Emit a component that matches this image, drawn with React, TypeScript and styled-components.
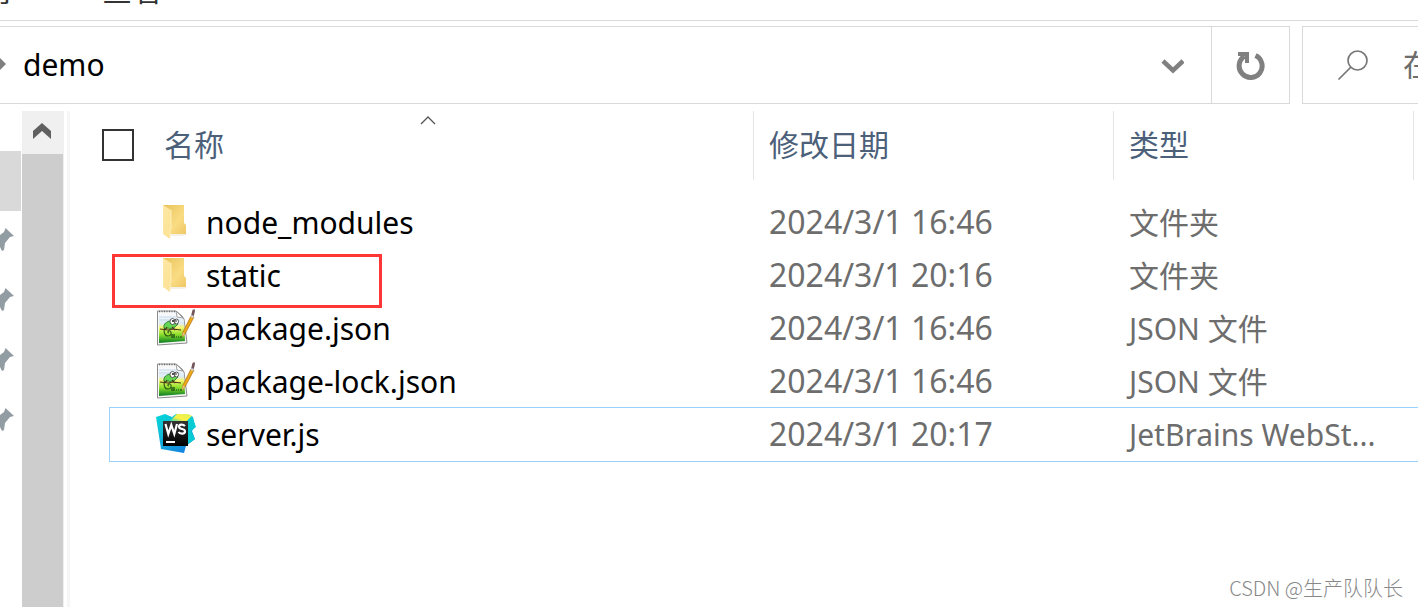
import React from "react";
import styled, { createGlobalStyle, css } from "styled-components";

const LINE = "#d9d9d9";
const GREY = "#6d6d6d";
const HEADER = "#4c607a";

const GlobalStyle = createGlobalStyle`
  * { box-sizing: border-box; }
  body {
    margin: 0;
    background: #fff;
    color: #000;
    font-family: "Noto Sans", "Noto Sans CJK SC", sans-serif;
    font-size: 30px;
    line-height: 40px;
    overflow: hidden;
  }
  button, input { font: inherit; color: inherit; background: none; border: 0; padding: 0; margin: 0; }
  svg { display: block; flex: none; }
`;

const Window = styled.div`
  position: relative;
  display: flex;
  flex-direction: column;
  height: 100vh;
  overflow: hidden;
`;

const RibbonTabs = styled.nav`
  display: flex;
  flex: none;
  align-items: flex-end;
  gap: 80px;
  height: 21px;
  margin-left: -38px;
  padding-bottom: 10px;
  border-bottom: 1px solid ${LINE};
  overflow: hidden;
`;

const RibbonTab = styled.button`
  flex: none;
  color: #333;
`;

const NavigationRow = styled.div`
  display: flex;
  flex: none;
  gap: 12px;
  height: 78px;
  margin-top: 5px;
`;

const AddressBar = styled.div`
  display: flex;
  flex: 1;
  align-items: center;
  border: 1px solid ${LINE};
  border-left: 0;
`;

const Crumb = styled.button`
  flex: 1;
  margin-left: 17px;
  text-align: left;
`;

const BarButton = styled.button<{ $divided?: boolean }>`
  display: flex;
  align-items: center;
  justify-content: center;
  width: 78px;
  height: 100%;
  padding-top: 2px;
  ${(p) => p.$divided && css`border-left: 1px solid ${LINE};`}
`;

const SearchBox = styled.label`
  display: flex;
  flex: none;
  align-items: center;
  gap: 34px;
  width: 116px;
  padding-left: 34px;
  border: 1px solid ${LINE};
  border-right: 0;
  overflow: hidden;
`;

const SearchInput = styled.input`
  flex: none;
  width: 240px;
  color: ${GREY};
  &::placeholder { color: ${GREY}; opacity: 1; }
`;

const Body = styled.div`
  display: flex;
  flex: 1;
  min-height: 0;
  margin-top: 7px;
`;

const QuickAccess = styled.ul`
  flex: none;
  width: 22px;
  margin: 0;
  padding: 40px 1px 0 0;
  list-style: none;
`;

const QuickItem = styled.li<{ $selected?: boolean }>`
  display: flex;
  align-items: center;
  height: 60px;
  padding-bottom: 2px;
  background: ${(p) => (p.$selected ? LINE : "transparent")};
`;

const ScrollTrack = styled.div`
  display: flex;
  flex: none;
  flex-direction: column;
  width: 42px;
  background: #f0f0f0;
`;

const ScrollUp = styled.button`
  display: flex;
  justify-content: center;
  height: 43px;
  padding: 12px 2px 0 0;
`;

const ScrollThumb = styled.div`
  flex: 1;
  margin-right: 1px;
  background: #cdcdcd;
`;

const Splitter = styled.div`
  flex: none;
  width: 3px;
  margin: 0 40px 0 3px;
  background: #f6f6f6;
`;

const FileTable = styled.table`
  flex: 1;
  width: 100%;
  align-self: flex-start;
  table-layout: fixed;
  border-collapse: collapse;
`;

const Column = styled.col<{ $width?: number }>`
  width: ${(p) => (p.$width ? `${p.$width}px` : "auto")};
`;

const HeadCell = styled.th`
  height: 85px;
  padding: 0;
  vertical-align: top;
  text-align: left;
  font-weight: 400;
  color: ${HEADER};
`;

const HeadContent = styled.div<{ $lead?: boolean }>`
  position: relative;
  display: flex;
  align-items: center;
  gap: 30px;
  height: 69px;
  margin-left: ${(p) => (p.$lead ? "-8px" : "0")};
  padding-bottom: 2px;
  padding-left: ${(p) => (p.$lead ? "0" : "15px")};
  border-right: 1px solid #e5e5e5;
`;

const SelectAll = styled.input`
  appearance: none;
  width: 32px;
  height: 32px;
  border: 2px solid #333;
`;

const SortMark = styled.svg`
  position: absolute;
  top: 4px;
  left: 50%;
  transform: translateX(-50%);
`;

const FileRow = styled.tr<{ $focused?: boolean }>`
  outline: ${(p) => (p.$focused ? "1px solid #99d1ff" : "none")};
`;

const Cell = styled.td`
  position: relative;
  height: 53px;
  padding: 0 0 0 15px;
  color: ${GREY};
  white-space: nowrap;
`;

const DateCell = styled(Cell)`
  padding-bottom: 2px;
  font-size: 32px;
`;

const NameCell = styled(Cell)`
  padding-left: 46px;
  color: #000;
`;

const FileLabel = styled.div`
  display: flex;
  align-items: center;
  gap: 10px;

  svg { margin-bottom: 4px; }
`;

const Marker = styled.span`
  position: absolute;
  z-index: 1;
  top: 5px;
  left: 2px;
  width: 270px;
  height: 54px;
  border: 3px solid #ff3636;
`;

const Watermark = styled.div`
  position: absolute;
  right: 15px;
  bottom: 5px;
  font-family: "Noto Sans CJK SC", sans-serif;
  font-size: 20px;
  line-height: 28px;
  font-weight: 300;
  color: #888;
`;

const FolderIcon = () => (
  <svg width="40" height="40" viewBox="0 0 40 40" aria-hidden="true">
    <defs>
      <linearGradient id="folderBack" x1="0" y1="0" x2="1" y2="1">
        <stop offset="0" stopColor="#e9c25a" />
        <stop offset="0.6" stopColor="#f9dc83" />
        <stop offset="1" stopColor="#efc765" />
      </linearGradient>
      <linearGradient id="folderFlap" x1="0" y1="0" x2="1" y2="1">
        <stop offset="0" stopColor="#fee9a5" />
        <stop offset="1" stopColor="#fbe091" />
      </linearGradient>
    </defs>
    <path d="M13 33h19l-4 2H14z" fill="#f4f0e8" />
    <path d="M7 4h21v18l2 2v9H7z" fill="url(#folderBack)" />
    <path d="M7 4l8 5v19l-1 1v9l-7-5z" fill="url(#folderFlap)" />
    <path d="M15 9v19l-1 1v8" fill="none" stroke="#fff0bb" />
  </svg>
);

const NotepadIcon = () => (
  <svg width="40" height="40" viewBox="0 0 40 40" aria-hidden="true">
    <defs>
      <linearGradient id="notePaper" x1="0" y1="0" x2="0" y2="1">
        <stop offset="0" stopColor="#f8fbff" />
        <stop offset="0.3" stopColor="#dcebf5" />
        <stop offset="0.45" stopColor="#f2f86c" />
        <stop offset="0.7" stopColor="#8ade2b" />
        <stop offset="1" stopColor="#087b24" />
      </linearGradient>
    </defs>
    <path d="M1.500 4H20l6 5 2 3 3 24-29.500 2z" fill="#f8f8f8" stroke="#8b8b8b" />
    <path d="M3 8h21l4 6 1 20-26 2z" fill="url(#notePaper)" />
    <path d="M20 4l1 6 6 1z" fill="#fff" stroke="#888" strokeWidth=".8" />
    <path d="M3 4.500h17" stroke="#666" strokeWidth="1.500" strokeDasharray="1 1.500" />
    <path d="M3 10h17M3 13h21" stroke="#b5cbdc" strokeWidth=".7" />
    <path d="M8 21c-1-4 3-7 7-7l4-1 3 4-3 3-3 2-4-1-2 1-2-1z" fill="#65d651" stroke="#236b28" strokeWidth=".8" />
    <path d="M8.500 21c-1 4 0 8 3.500 8s4-4 2-5-3 2-1 2" fill="none" stroke="#365e17" strokeWidth="1.200" />
    <path d="M4 22l8 1 5-1 8 1M16 20l3 3m-8-3-2 3" stroke="#4e341b" strokeWidth="1.200" fill="none" />
    <ellipse cx="16.500" cy="14.500" rx="2.500" ry="3" fill="#fff" stroke="#333" strokeWidth=".8" />
    <ellipse cx="20.500" cy="14.500" rx="2" ry="2.500" fill="#fff" stroke="#333" strokeWidth=".8" />
    <circle cx="17" cy="14" r="1" fill="#111" />
    <circle cx="20" cy="14" r=".8" fill="#111" />
    <path d="M16 27v4m2-4v4m2-1h1m1 0h1m1 0h2" stroke="#173e12" strokeWidth="1.200" />
    <path d="M35 9l3 1-9 17-3 3 1-5z" fill="#efaa18" stroke="#a96b15" strokeWidth=".7" />
    <path d="M35 9l1.500-6 2-1 .5 2-1.500 6z" fill="#735458" />
    <path d="M34.500 10l2.500 1 1-2-2.500-1z" fill="#cfd2d5" />
    <path d="M27 25l-1 5 3-3z" fill="#eac384" />
  </svg>
);

const WebStormIcon = () => (
  <svg width="40" height="40" viewBox="0 0 40 40" aria-hidden="true">
    <defs>
      <linearGradient id="wsBlue" x1="0" y1="0" x2=".6" y2="1">
        <stop offset="0" stopColor="#00d5d8" />
        <stop offset=".4" stopColor="#12bfd8" />
        <stop offset="1" stopColor="#1586df" />
      </linearGradient>
      <linearGradient id="wsYellow" x1="0" y1="1" x2="1" y2="0">
        <stop offset=".1" stopColor="#16d7bd" />
        <stop offset=".5" stopColor="#fff043" />
        <stop offset="1" stopColor="#d7f35c" />
      </linearGradient>
      <linearGradient id="wsTile" x1="0" y1="0" x2="0" y2="1">
        <stop offset="0" stopColor="#333" />
        <stop offset="1" stopColor="#000" />
      </linearGradient>
    </defs>
    <path d="M5 36L0 4l9-3 7 3 4-3h11l6 3 2 9-3 5 3 8-9 7-2 7z" fill="url(#wsBlue)" />
    <path d="M12 10l9-9h11l4 2-7 7z" fill="url(#wsYellow)" />
    <path d="M30 9l6-6 4 11-5 4 4 8-7 5z" fill="#08cbd3" />
    <path d="M7 8h25v25H7z" fill="url(#wsTile)" />
    <path d="M10 29h9" stroke="#fff" strokeWidth="2" />
    <path d="M9.500 11l2.800 10 3-9 3 9 2.700-10" fill="none" stroke="#fff" strokeWidth="2.200" />
    <path d="M29 13c-2-2-6-2-6 .8 0 3 6 1.500 6 4.500 0 3-5 3-6.500 .7" fill="none" stroke="#fff" strokeWidth="2.200" />
  </svg>
);

const PinIcon = () => (
  <svg width="14" height="24" viewBox="0 0 14 24" aria-hidden="true">
    <path d="M5.500 0L14 8l-4 1-5 6-1 7-2 1-2-4V7l4-3z" fill="#929ca3" />
  </svg>
);

const icons = { folder: FolderIcon, json: NotepadIcon, webstorm: WebStormIcon };

type FileEntry = {
  name: string;
  date: string;
  type: string;
  icon: keyof typeof icons;
  marked?: boolean;
  focused?: boolean;
};

const files: FileEntry[] = [
  { name: "node_modules", date: "2024/3/1 16:46", type: "文件夹", icon: "folder" },
  { name: "static", date: "2024/3/1 20:16", type: "文件夹", icon: "folder", marked: true },
  { name: "package.json", date: "2024/3/1 16:46", type: "JSON 文件", icon: "json" },
  { name: "package-lock.json", date: "2024/3/1 16:46", type: "JSON 文件", icon: "json" },
  { name: "server.js", date: "2024/3/1 20:17", type: "JetBrains WebSt...", icon: "webstorm", focused: true },
];

export default function App() {
  return (
    <Window>
      <GlobalStyle />
      <RibbonTabs>
        <RibbonTab>共享</RibbonTab>
        <RibbonTab>查看</RibbonTab>
      </RibbonTabs>

      <NavigationRow>
        <AddressBar>
          <svg width="6" height="14" viewBox="0 0 6 14" aria-hidden="true">
            <path d="M0 0l6 6-6 6z" fill="#808080" />
          </svg>
          <Crumb>demo</Crumb>
          <BarButton aria-label="Previous locations">
            <svg width="24" height="16" viewBox="0 0 24 16" aria-hidden="true">
              <path d="M3 3l10 9.500L23 3" fill="none" stroke="#808080" strokeWidth="4.500" />
            </svg>
          </BarButton>
          <BarButton $divided aria-label="Refresh">
            <svg width="30" height="30" viewBox="0 0 30 30" aria-hidden="true">
              <path d="M19.500 4.500A11.500 11.500 0 1 1 8.500 5.200" fill="none" stroke="#808080" strokeWidth="5" />
              <path d="M2 1h11v11H9V5H2z" fill="#808080" />
            </svg>
          </BarButton>
        </AddressBar>
        <SearchBox>
          <svg width="32" height="32" viewBox="0 0 32 32" aria-hidden="true">
            <circle cx="20.500" cy="11.500" r="9.500" fill="none" stroke="#777" strokeWidth="1.700" />
            <path d="M14 18L1.500 30.500" stroke="#777" strokeWidth="1.700" />
          </svg>
          <SearchInput aria-label="搜索" placeholder="在 demo 中搜索" />
        </SearchBox>
      </NavigationRow>

      <Body>
        <QuickAccess>
          <QuickItem $selected />
          {[0, 1, 2, 3].map((n) => (
            <QuickItem key={n}>
              <PinIcon />
            </QuickItem>
          ))}
        </QuickAccess>
        <ScrollTrack>
          <ScrollUp aria-label="Scroll up">
            <svg width="18" height="16" viewBox="0 0 18 16" aria-hidden="true">
              <path d="M9 0l9 8v8L9 8l-9 8V8z" fill="#606060" />
            </svg>
          </ScrollUp>
          <ScrollThumb />
        </ScrollTrack>
        <Splitter />
        <FileTable>
          <colgroup>
            <Column />
            <Column $width={360} />
            <Column $width={300} />
            <Column $width={4} />
          </colgroup>
          <thead>
            <tr>
              <HeadCell>
                <HeadContent $lead>
                  <SelectAll type="checkbox" aria-label="Select all" />
                  名称
                  <SortMark width="16" height="10" viewBox="0 0 16 10" aria-hidden="true">
                    <path d="M1 9l7-7 7 7" fill="none" stroke="#555" strokeWidth="1.300" />
                  </SortMark>
                </HeadContent>
              </HeadCell>
              <HeadCell><HeadContent>修改日期</HeadContent></HeadCell>
              <HeadCell><HeadContent>类型</HeadContent></HeadCell>
              <HeadCell />
            </tr>
          </thead>
          <tbody>
            {files.map((file) => {
              const Icon = icons[file.icon];
              return (
                <FileRow key={file.name} $focused={file.focused}>
                  <NameCell>
                    <FileLabel>
                      <Icon />
                      {file.name}
                    </FileLabel>
                    {file.marked && <Marker />}
                  </NameCell>
                  <DateCell>{file.date}</DateCell>
                  <Cell>{file.type}</Cell>
                  <td />
                </FileRow>
              );
            })}
          </tbody>
        </FileTable>
      </Body>
      <Watermark>CSDN @生产队队长</Watermark>
    </Window>
  );
}
